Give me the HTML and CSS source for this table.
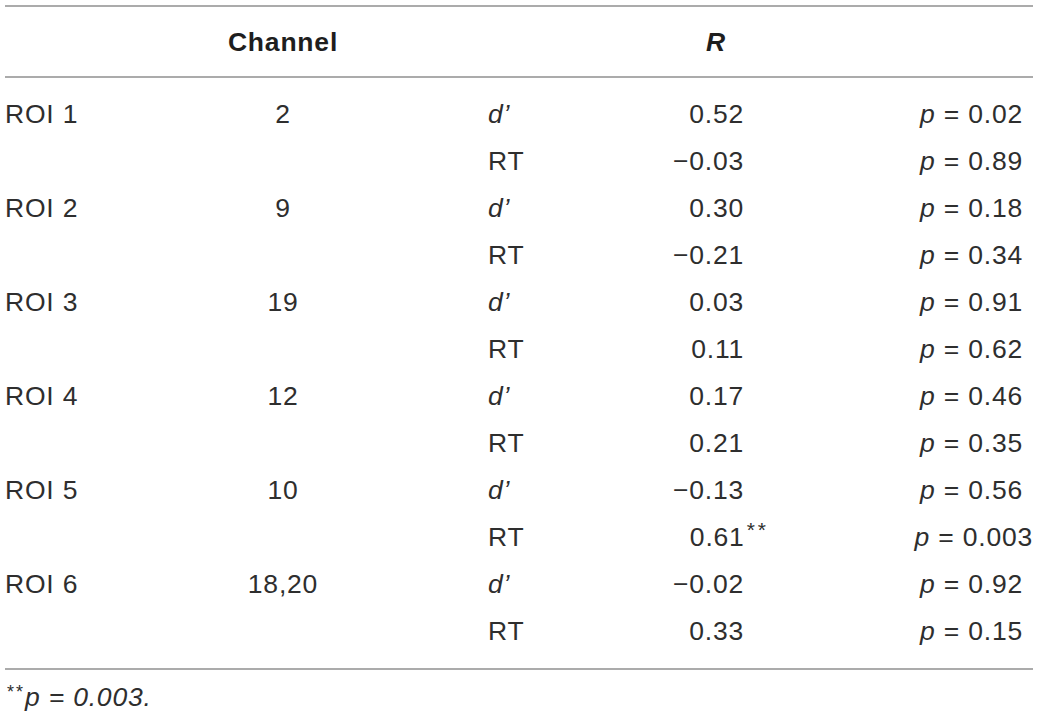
FILE: index.html
```html
<!DOCTYPE html>
<html lang="en">
<head>
<meta charset="utf-8">
<title>Table</title>
<link rel="stylesheet" href="styles.css">
</head>
<body>
<div class="wrap">
<table class="data">
  <colgroup>
    <col class="c1"><col class="c2"><col class="c3"><col class="c4"><col class="c5">
  </colgroup>
  <thead>
    <tr>
      <th class="left"></th>
      <th class="center">Channel</th>
      <th></th>
      <th class="rhead"><i>R</i></th>
      <th></th>
    </tr>
  </thead>
  <tbody>
    <tr class="first"><td class="left">ROI 1</td><td class="center">2</td><td class="kind"><i>d’</i></td><td class="num">0.52</td><td class="pv"><i>p</i> = 0.02</td></tr>
    <tr><td class="left"></td><td class="center"></td><td class="kind">RT</td><td class="num">−0.03</td><td class="pv"><i>p</i> = 0.89</td></tr>
    <tr><td class="left">ROI 2</td><td class="center">9</td><td class="kind"><i>d’</i></td><td class="num">0.30</td><td class="pv"><i>p</i> = 0.18</td></tr>
    <tr><td class="left"></td><td class="center"></td><td class="kind">RT</td><td class="num">−0.21</td><td class="pv"><i>p</i> = 0.34</td></tr>
    <tr><td class="left">ROI 3</td><td class="center">19</td><td class="kind"><i>d’</i></td><td class="num">0.03</td><td class="pv"><i>p</i> = 0.91</td></tr>
    <tr><td class="left"></td><td class="center"></td><td class="kind">RT</td><td class="num">0.11</td><td class="pv"><i>p</i> = 0.62</td></tr>
    <tr><td class="left">ROI 4</td><td class="center">12</td><td class="kind"><i>d’</i></td><td class="num">0.17</td><td class="pv"><i>p</i> = 0.46</td></tr>
    <tr><td class="left"></td><td class="center"></td><td class="kind">RT</td><td class="num">0.21</td><td class="pv"><i>p</i> = 0.35</td></tr>
    <tr><td class="left">ROI 5</td><td class="center">10</td><td class="kind"><i>d’</i></td><td class="num">−0.13</td><td class="pv"><i>p</i> = 0.56</td></tr>
    <tr><td class="left"></td><td class="center"></td><td class="kind">RT</td><td class="num"><span class="sig">0.61<sup class="star">**</sup></span></td><td class="pv"><span class="wide"><i>p</i> = 0.003</span></td></tr>
    <tr><td class="left">ROI 6</td><td class="center">18,20</td><td class="kind"><i>d’</i></td><td class="num">−0.02</td><td class="pv"><i>p</i> = 0.92</td></tr>
    <tr class="last"><td class="left"></td><td class="center"></td><td class="kind">RT</td><td class="num">0.33</td><td class="pv"><i>p</i> = 0.15</td></tr>
  </tbody>
</table>
<p class="note"><sup class="fstar">**</sup><i>p = 0.003.</i></p>
</div>
</body>
</html>
```

FILE: styles.css
```css
html, body {
  margin: 0;
  padding: 0;
  background: #ffffff;
}

body {
  font-family: "Liberation Sans", Arial, sans-serif;
  color: #2e2e2e;
  font-size: 26.5px;
  letter-spacing: 0.8px;
}

.wrap {
  padding: 5px 6px 0 5px;
}

.data {
  width: 1028px;
  border-collapse: collapse;
  table-layout: fixed;
  border-top: 2px solid #ababab;
  border-bottom: 2px solid #ababab;
}

.c1 { width: 180px; }
.c2 { width: 196px; }
.c3 { width: 239px; }
.c4 { width: 133px; }
.c5 { width: 280px; }

.data th,
.data td {
  padding: 0;
  line-height: 47px;
  height: 47px;
  white-space: nowrap;
  vertical-align: top;
}

.data thead th {
  height: 67px;
  line-height: 67px;
  padding-top: 2px;
  font-weight: bold;
  border-bottom: 2px solid #ababab;
  color: #1e1e1e;
}

.data tr.first td {
  padding-top: 13px;
}

.data tr.last td {
  padding-bottom: 13px;
}

.left {
  text-align: left;
  padding-left: 0 !important;
}

.center {
  text-align: center;
}

.rhead {
  text-align: right;
  padding-right: 27px !important;
}

.kind {
  text-align: left;
  padding-left: 107px !important;
}

.num {
  text-align: right;
  padding-right: 9px !important;
}

.pv {
  text-align: right;
  padding-right: 10px !important;
}

.sig {
  display: inline-block;
  margin-right: -25px;
}

.star {
  font-size: 21px;
  line-height: 0;
  vertical-align: 9px;
  letter-spacing: 3px;
  margin-left: 2px;
}

.fstar {
  font-size: 18px;
  line-height: 0;
  vertical-align: 8px;
  letter-spacing: 2px;
  margin-left: -3px;
}

.wide {
  display: inline-block;
  margin-right: -10px;
}

.note {
  margin: 4px 0 0 5px;
  line-height: 47px;
}
```
